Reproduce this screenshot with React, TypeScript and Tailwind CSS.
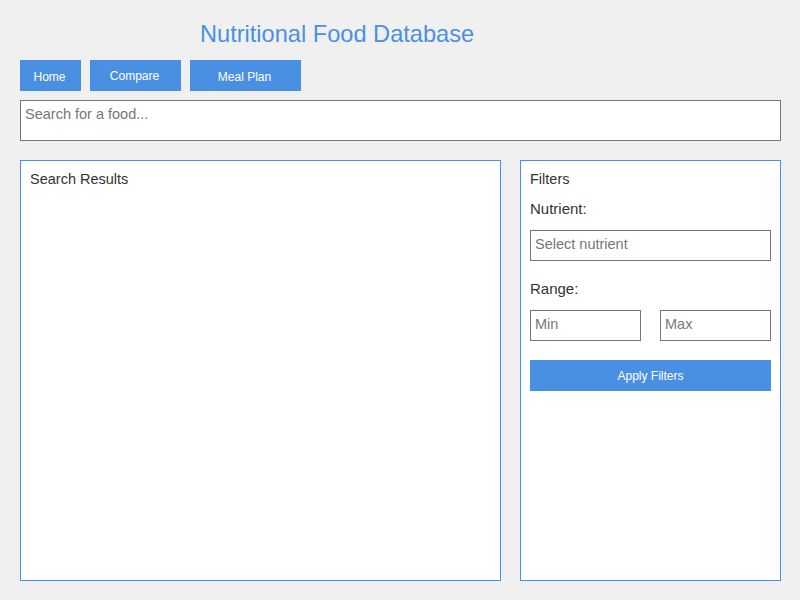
export default function App() {
  const font = { fontFamily: '"Liberation Sans", Arial, sans-serif' };
  return (
    <div style={font} className="w-[800px] h-[600px] bg-[#f0f0f0] pl-[20px] pr-[19px] pt-[20px] overflow-hidden">
      <div className="h-[28px] leading-[28px] text-[23.6px] text-[#4a90e2] pl-[180px] whitespace-nowrap">
        Nutritional Food Database
      </div>
      <div className="mt-[12px] flex gap-[9px] text-[12px] text-white">
        <div className="w-[61px] h-[31px] shrink-0 bg-[#4a90e2] flex items-center justify-center pt-[2px] pr-[2px]">Home</div>
        <div className="w-[91px] h-[31px] shrink-0 bg-[#4a90e2] flex items-center justify-center pr-[2px]">Compare</div>
        <div className="w-[111px] h-[31px] shrink-0 bg-[#4a90e2] flex items-center justify-center pt-[2px] pr-[2px]">Meal Plan</div>
      </div>
      <div className="mt-[9px] w-[761px] h-[41px] bg-white border border-[#777] pl-[4px] pt-[5px] text-[14.5px] leading-[17px] text-[#777]">
        Search for a food...
      </div>
      <div className="mt-[19px] flex gap-[19px]">
        <div className="w-[481px] h-[421px] shrink-0 bg-white border border-[#4a90e2] px-[9px] pt-[10px]">
          <div className="text-[14.5px] leading-[16px] text-[#333]">Search Results</div>
        </div>
        <div className="w-[261px] h-[421px] shrink-0 bg-white border border-[#4a90e2] px-[9px] pt-[10px] flex flex-col">
          <div className="text-[14.5px] leading-[16px] text-[#333]">Filters</div>
          <div className="mt-[13px] text-[15px] leading-[17px] text-[#333]">Nutrient:</div>
          <div className="mt-[13px] h-[31px] border border-[#777] pl-[4px] pt-[5px] text-[14.5px] leading-[16px] text-[#777]">
            Select nutrient
          </div>
          <div className="mt-[19px] text-[15px] leading-[17px] text-[#333]">Range:</div>
          <div className="mt-[13px] flex gap-[19px]">
            <div className="w-[111px] h-[31px] shrink-0 border border-[#777] pl-[4px] pt-[5px] text-[14.5px] leading-[16px] text-[#777]">Min</div>
            <div className="w-[111px] h-[31px] shrink-0 border border-[#777] pl-[4px] pt-[5px] text-[14.5px] leading-[16px] text-[#777]">Max</div>
          </div>
          <div className="mt-[19px] h-[31px] bg-[#4a90e2] flex items-center justify-center text-[12px] text-white">
            Apply Filters
          </div>
        </div>
      </div>
    </div>
  );
}
